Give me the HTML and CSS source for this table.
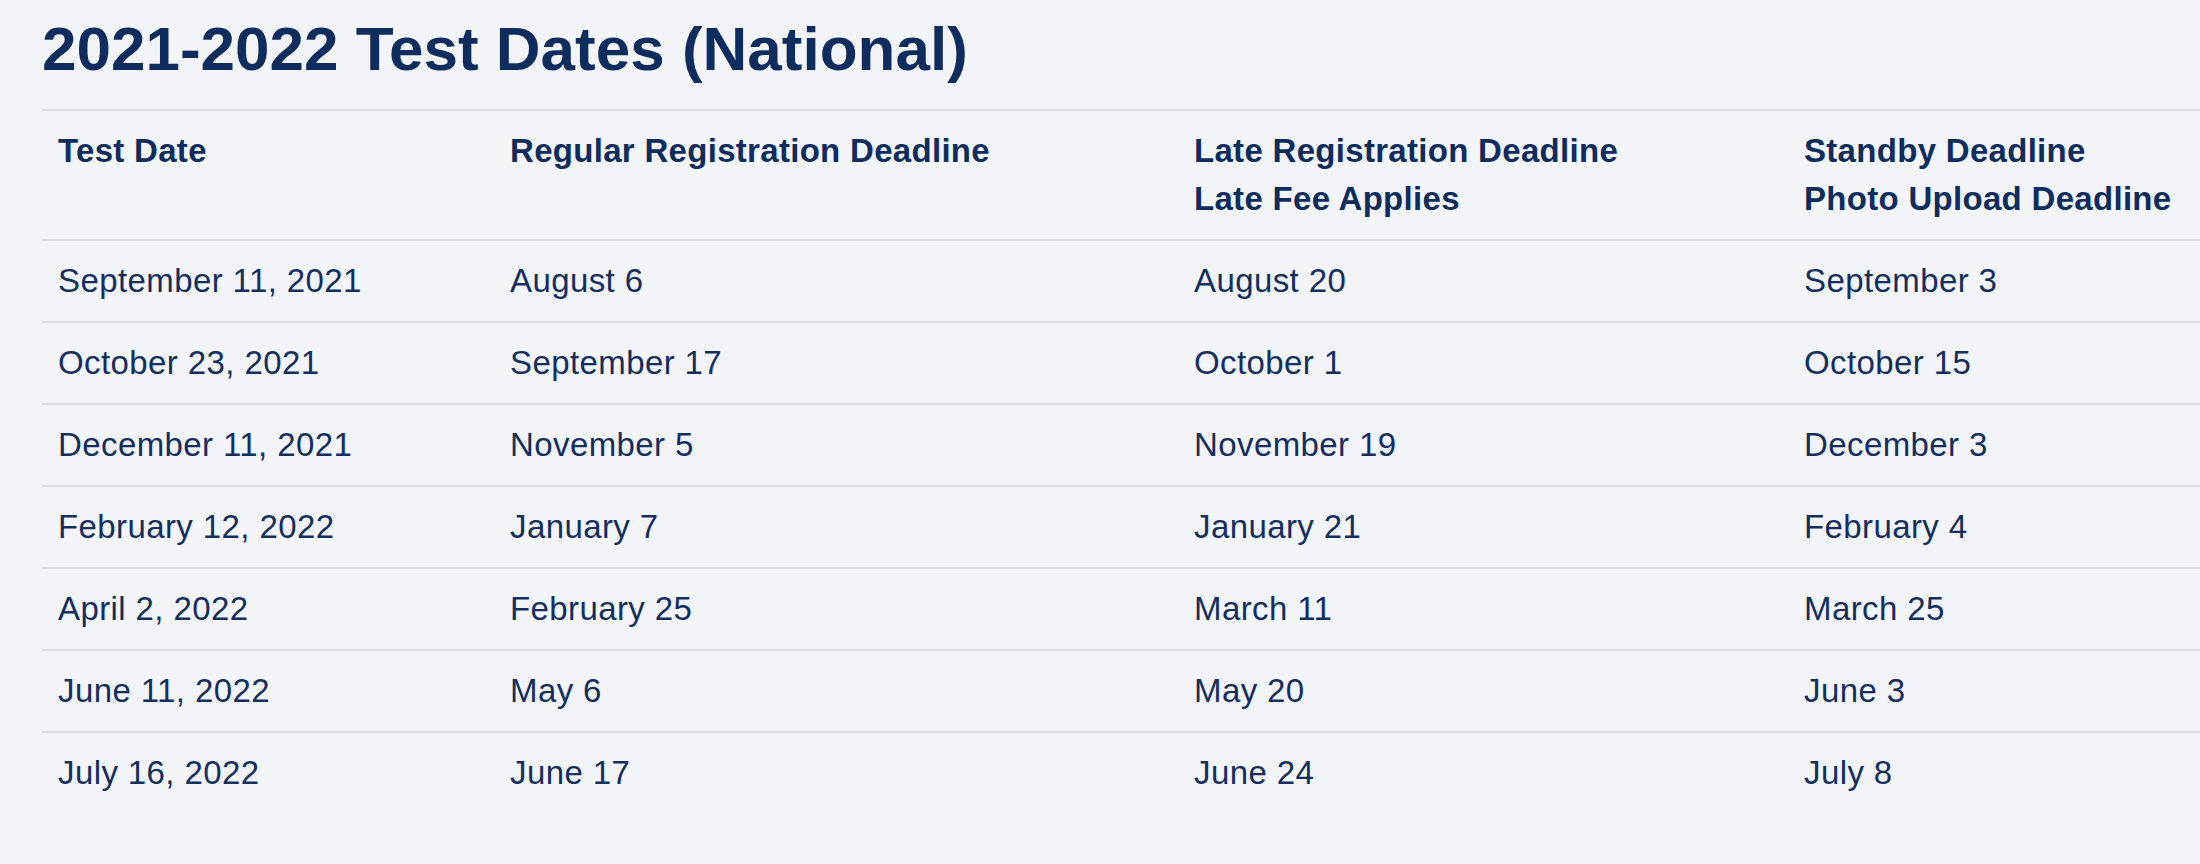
FILE: index.html
```html
<!DOCTYPE html>
<html lang="en">
<head>
<meta charset="utf-8">
<title>2021-2022 Test Dates (National)</title>
<link rel="stylesheet" href="styles.css">
</head>
<body>
<main class="page">
  <h1 class="title">2021-2022 Test Dates (National)</h1>
  <table class="dates">
    <colgroup>
      <col class="c1"><col class="c2"><col class="c3"><col class="c4">
    </colgroup>
    <thead>
      <tr>
        <th>Test Date</th>
        <th>Regular Registration Deadline</th>
        <th>Late Registration Deadline<br>Late Fee Applies</th>
        <th>Standby Deadline<br>Photo Upload Deadline</th>
      </tr>
    </thead>
    <tbody>
      <tr><td>September 11, 2021</td><td>August 6</td><td>August 20</td><td>September 3</td></tr>
      <tr><td>October 23, 2021</td><td>September 17</td><td>October 1</td><td>October 15</td></tr>
      <tr><td>December 11, 2021</td><td>November 5</td><td>November 19</td><td>December 3</td></tr>
      <tr><td>February 12, 2022</td><td>January 7</td><td>January 21</td><td>February 4</td></tr>
      <tr><td>April 2, 2022</td><td>February 25</td><td>March 11</td><td>March 25</td></tr>
      <tr><td>June 11, 2022</td><td>May 6</td><td>May 20</td><td>June 3</td></tr>
      <tr><td>July 16, 2022</td><td>June 17</td><td>June 24</td><td>July 8</td></tr>
    </tbody>
  </table>
</main>
</body>
</html>
```
FILE: styles.css
```css
html, body {
  margin: 0;
  padding: 0;
  background: #f2f4f8;
}
body {
  font-family: "Liberation Sans", Arial, Helvetica, sans-serif;
  color: #0e2d5e;
  overflow: hidden;
}
.page {
  padding-left: 42px;
}
.title {
  margin: 12px 0 23px;
  font-size: 62px;
  line-height: 74px;
  font-weight: 700;
  letter-spacing: 0;
}
.dates {
  width: 2158px;
  border-collapse: collapse;
  table-layout: fixed;
  font-size: 33px;
  line-height: 48px;
}
.c1 { width: 452px; }
.c2 { width: 684px; }
.c3 { width: 610px; }
.c4 { width: 412px; }
.dates th,
.dates td {
  text-align: left;
  vertical-align: top;
  padding: 16px;
  white-space: nowrap;
}
.dates th {
  font-weight: 700;
  letter-spacing: 0.3px;
}
.dates td {
  font-weight: 400;
  letter-spacing: 0.4px;
  color: #142f5f;
}
.dates thead tr,
.dates tbody tr {
  border-top: 2px solid #dcdee2;
}
```
